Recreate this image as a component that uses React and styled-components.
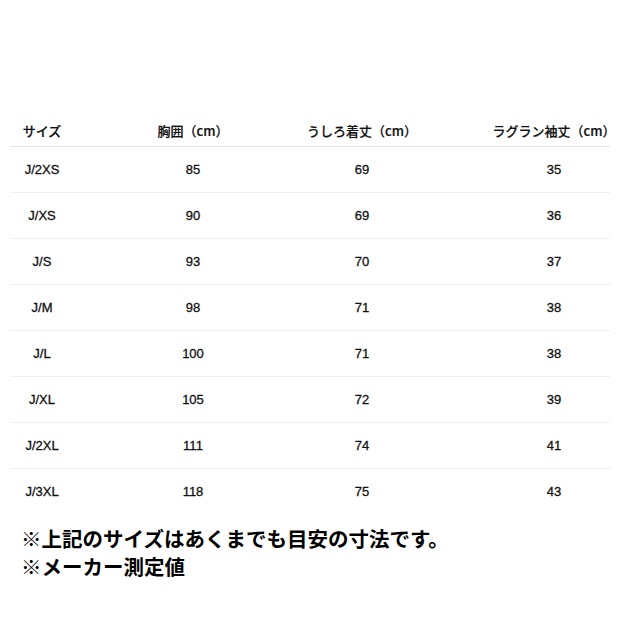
import React from 'react';
import styled, { createGlobalStyle } from 'styled-components';

const headers = ['サイズ', '胸囲（cm）', 'うしろ着丈（cm）', 'ラグラン袖丈（cm）'];

const rows = [
  ['J/2XS', 85, 69, 35],
  ['J/XS', 90, 69, 36],
  ['J/S', 93, 70, 37],
  ['J/M', 98, 71, 38],
  ['J/L', 100, 71, 38],
  ['J/XL', 105, 72, 39],
  ['J/2XL', 111, 74, 41],
  ['J/3XL', 118, 75, 43],
];

const App = () => (
  <Page>
    <GlobalStyle />
    <Table>
      <HeadRow>
        {headers.map((h, i) => (
          <Cell key={h} $col={i}>{h}</Cell>
        ))}
      </HeadRow>
      {rows.map((r) => (
        <Row key={r[0]}>
          {r.map((v, i) => (
            <Cell key={i} $col={i}>{v}</Cell>
          ))}
        </Row>
      ))}
    </Table>
    <Notes>
      <p>※上記のサイズはあくまでも目安の寸法です。</p>
      <p>※メーカー測定値</p>
    </Notes>
  </Page>
);

export default App;

const GlobalStyle = createGlobalStyle`
  body {
    margin: 0;
    background: #fff;
  }
`;

const Page = styled.div`
  width: 620px;
  height: 620px;
  box-sizing: border-box;
  padding: 114px 10px 0;
  font-family: 'Liberation Sans', 'Noto Sans CJK JP', sans-serif;
  color: #111;
`;

const Table = styled.div`
  width: 600px;
`;

const Row = styled.div`
  display: grid;
  grid-template-columns: 64px 238px 100px 198px;
  height: 45px;
  border-bottom: 1px solid #efefef;
  font-size: 13px;
  -webkit-text-stroke: 0.3px #111;
  &:last-child {
    border-bottom: none;
  }
`;

const HeadRow = styled(Row)`
  height: 32px;
  border-bottom: 1px solid #e4e4e4;
  font-family: 'Noto Sans CJK JP', sans-serif;
  font-weight: 500;
  -webkit-text-stroke: 0.2px #111;
`;

const Cell = styled.div`
  display: flex;
  align-items: center;
  justify-content: center;
  white-space: nowrap;
  padding-left: ${(p) => (p.$col === 3 ? '86px' : '0')};
`;

const Notes = styled.div`
  margin-top: 10px;
  padding-left: 11px;
  font-family: 'Noto Sans CJK JP', sans-serif;
  font-weight: 700;
  font-size: 20.5px;
  line-height: 28px;
  color: #000;
  p {
    margin: 0;
  }
`;
